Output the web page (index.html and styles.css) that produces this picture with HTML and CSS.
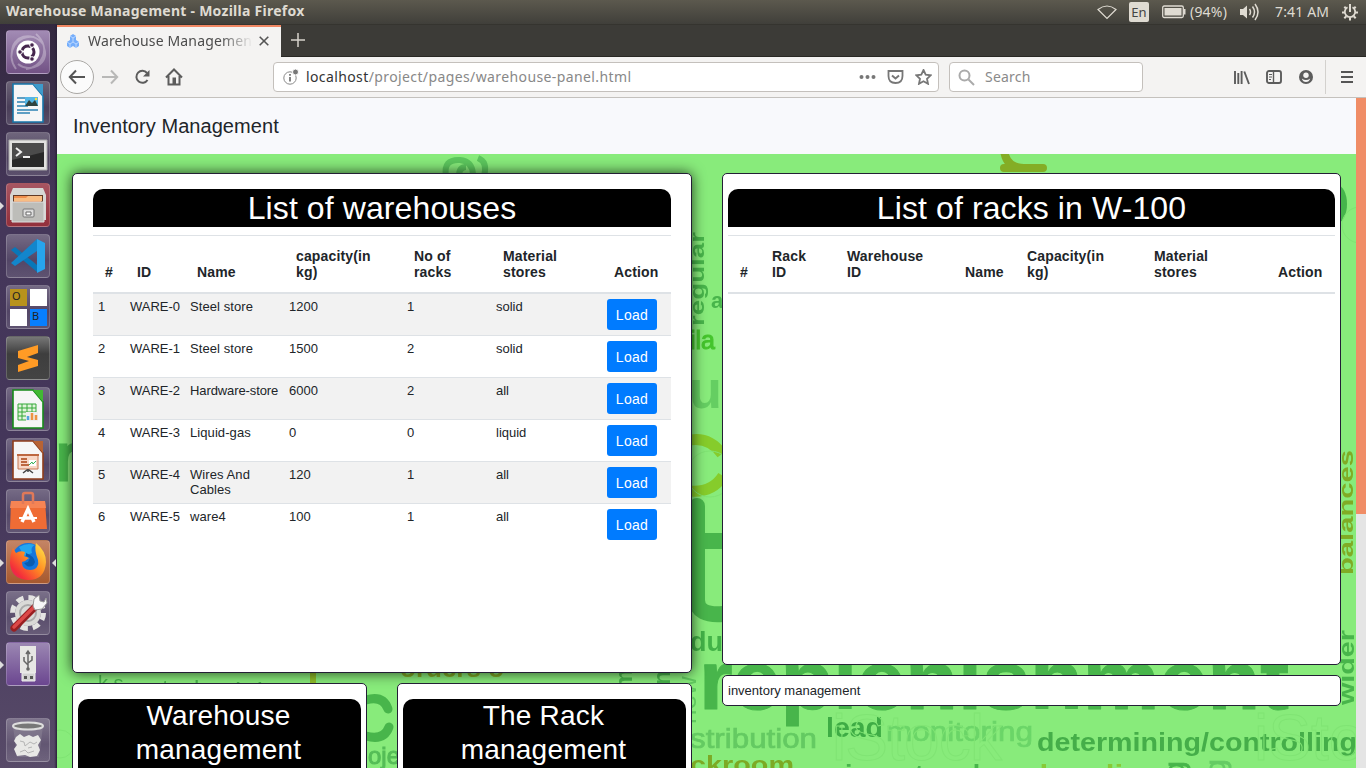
FILE: index.html
```html
<!DOCTYPE html>
<html lang="en">
<head>
<meta charset="utf-8">
<title>Warehouse Management</title>
<link rel="stylesheet" href="styles.css">
</head>
<body>
<header class="topbar">
  <b class="win-title">Warehouse Management - Mozilla Firefox</b>
  <div class="indicators">
    <svg class="i-wifi" width="20" height="16" viewBox="0 0 20 16"><path d="M1 5.500Q10-1.500 19 5.500L10 14.500Z" fill="none" stroke="#dfdbd2" stroke-width="1.200"/></svg>
    <span class="lang">En</span>
    <svg class="i-batt" width="24" height="14" viewBox="0 0 24 14"><rect x=".7" y="1" width="20.600" height="11.500" rx="1.500" fill="none" stroke="#dfdbd2" stroke-width="1.300"/><rect x="2.500" y="3" width="17" height="7.500" fill="#dfdbd2"/><path d="M22.500 4v5.500" stroke="#dfdbd2" stroke-width="2"/></svg>
    <span class="pct">(94%)</span>
    <svg class="i-vol" width="21" height="18" viewBox="0 0 21 18"><path d="M1 6h3l4-3.500v13L4 12H1z" fill="#dfdbd2"/><path d="M10.500 6q2 3 0 6M13.500 3.500q4 5.500 0 11M16 1q6 8 0 16" fill="none" stroke="#dfdbd2" stroke-width="1.500"/></svg>
    <span class="clock">7:41 AM</span>
    <svg class="i-gear" width="18" height="18" viewBox="0 0 18 18"><g fill="none" stroke="#dfdbd2"><path d="M6.500 4.300a5.200 5.200 0 1 0 5 0" stroke-width="1.800"/><path d="M9 1v8" stroke-width="2"/><path d="M1 9.500h3M14 9.500h3M3.300 3.800l2 2M14.700 3.800l-2 2M3.300 15.200l2-2M14.700 15.200l-2-2M9 14.500v3" stroke-width="2"/></g></svg>
  </div>
</header>
<div class="desktop">
<nav class="launcher">
  <div class="tile dash"><svg viewBox="0 0 44 44"><g fill="none" stroke="#fff" opacity=".3" stroke-width="2"><path d="M6 22C6 6 26 0 37 14M38 18C44 34 24 44 12 34M10 39C-2 22 12 4 28 7M30 4c16 14 6 34-10 35"/></g><circle cx="22" cy="22" r="11.500" fill="#fff"/><circle cx="22" cy="22" r="6" fill="none" stroke="#45264d" stroke-width="3" stroke-dasharray="10.500 2" stroke-dashoffset="5"/><g fill="#45264d" stroke="#fff"><circle cx="14" cy="22" r="2.300"/><circle cx="26" cy="15" r="2.300"/><circle cx="26" cy="29" r="2.300"/></g></svg></div>
  <div class="tile"><svg viewBox="0 0 44 44"><path d="M7 3h20l10 12v26H7z" fill="#f6f6f6" stroke="#1676a9" stroke-width="1.600"/><path d="M27 3h10v12z" fill="#3d9acb"/><path d="M11 17h11M11 21h11M11 25h11M11 29h21M11 32h13" stroke="#2c83b4" stroke-width="1.600"/><path d="M19 16h13v9H19z" fill="#54b6e5"/><path d="M19 25l4-6 3 3 3-3 3 6z" fill="#30433e"/><circle cx="30" cy="18" r="1.200" fill="#ffdf3a"/></svg></div>
  <div class="tile"><svg viewBox="0 0 44 44"><path d="M3 8h38v30H3z" fill="#e1e1df" stroke="#aaa"/><path d="M6 11h32v24H6z" fill="#282828"/><path d="M6 11h32v9L6 28z" fill="#4b4b4b"/><path d="M10 16l5 4-5 4M17 25h7" fill="none" stroke="#eee" stroke-width="2"/></svg></div>
  <div class="tile files"><i class="pip"></i><svg viewBox="0 0 44 44"><path d="M7 5h30l3 7v25H4V12z" fill="#d7d7d4"/><path d="M7 12h30v8H7z" fill="#623a25"/><path d="M8 13h27v6H8z" fill="#ef8e4d"/><path d="M8 15h12l2-2h14v5H8z" fill="#f8bd83"/><path d="M6 19h32v20H6z" fill="#bdbdb9" stroke="#ddd"/><rect x="17" y="26" width="11" height="8" rx="1" fill="#ddd" stroke="#777"/><path d="M20 29h5v3h-5z" fill="#fff" stroke="#666"/></svg></div>
  <div class="tile"><svg viewBox="0 0 44 44"><path d="M5 16l4-3 22 18v7L5 16z" fill="#0877b9"/><path d="M31 5v12L9 32l-4-3L31 5z" fill="#1386cc"/><path d="M31 5l8 4v26l-8 4z" fill="#27a4ec"/></svg></div>
  <div class="tile workspaces"><span class="ws gold">O</span><span class="ws"></span><span class="ws"></span><span class="ws blue">B</span></div>
  <div class="tile sublime"><svg viewBox="0 0 44 44"><path d="M12 15l20-6v8l-11 4 11 3v6l-20 6v-7l11-4-11-3z" fill="#ff9b25"/></svg></div>
  <div class="tile"><svg viewBox="0 0 44 44"><path d="M7 3h20l10 12v26H7z" fill="#f6f6f6" stroke="#168b19" stroke-width="1.600"/><path d="M27 3h10v12z" fill="#42b833"/><path d="M12 17h18v16H12zM12 21h18M12 25h18M12 29h18M16 17v16M21 17v16M26 17v16" fill="#e2f4dc" stroke="#35a839"/><path d="M20 25h12v9H20z" fill="#eee"/><path d="M22 33v-4" stroke="#51a5dc" stroke-width="2.500"/><path d="M26 33v-7M30 33v-5" stroke="#ed9342" stroke-width="2.500"/></svg></div>
  <div class="tile"><svg viewBox="0 0 44 44"><path d="M7 3h20l10 12v26H7z" fill="#f6f6f6" stroke="#8f3d1b" stroke-width="1.600"/><path d="M27 3h10v12z" fill="#b76334"/><path d="M12 17h20v14H12z" fill="#f8d8c7" stroke="#c67853"/><path d="M11 17h22M15 21h6M15 24h6M15 27h14" stroke="#bd6740" stroke-width="2"/><path d="M23 22h7v6h-7z" fill="#fff"/><path d="M23 27l3-3 1 2 3-3" stroke="#36b35a" fill="none"/><path d="M17 35l4-3h2l4 3M22 31v3" stroke="#444" stroke-width="1.500" fill="none"/></svg></div>
  <div class="tile"><svg viewBox="0 0 44 44"><path d="M5 12h34l2 28H4z" fill="#ef6c35"/><path d="M5 12h34l1 7H4z" fill="#f58454"/><path d="M17 15V6q0-2 2-2h6q2 0 2 2v9" fill="none" stroke="#df7959" stroke-width="2.500"/><path d="M16 33l6-13 6 13M18 29h9" fill="none" stroke="#fff" stroke-width="3.500"/><path d="M13 29h18" stroke="#fff" stroke-width="2"/></svg></div>
  <div class="tile fox"><i class="pip"></i><i class="pip pip-active"></i><svg viewBox="0 0 44 44"><defs><linearGradient id="fx" x1="1" y1="0" x2="0" y2="1"><stop stop-color="#fff04e"/><stop offset=".45" stop-color="#ff8b22"/><stop offset=".8" stop-color="#f42d3b"/><stop offset="1" stop-color="#d31a86"/></linearGradient></defs><circle cx="22" cy="19" r="16" fill="#1576dd"/><path d="M13 7q8-5 16-2-5 2-3 8l-8 3z" fill="#23a6ef"/><path d="M7 8l3 5q4-3 9-1l-1 4 5 2-4 3-3 1q0 8 8 8 5 0 7-3 2-3 1-7-4-10-2-17 10 8 10 19-1 18-18 18Q5 39 4 23 4 13 7 8z" fill="url(#fx)"/><path d="M20 13q8 3 9 9-2 6-8 4l-3-3 4-1 2-4-4-2z" fill="#0a5bb0"/></svg></div>
  <div class="tile"><svg viewBox="0 0 44 44"><circle cx="22" cy="22" r="13" fill="#dadad7"/><circle cx="22" cy="22" r="15.500" fill="none" stroke="#e4e4e2" stroke-width="5" stroke-dasharray="7.200 4.970"/><circle cx="22" cy="22" r="8" fill="none" stroke="#aaa" stroke-width="2"/><path d="M8 37L31 14" stroke="#981f21" stroke-width="7" stroke-linecap="round"/><path d="M8 36L29 15" stroke="#dc4948" stroke-width="3.500" stroke-linecap="round"/><path d="M27 15l1-7 5-4 1 6 4 1 2-4 1 5-5 6-7 1z" fill="#f7f7f7" stroke="#999"/></svg></div>
  <div class="tile usb"><i class="pip"></i><svg viewBox="0 0 44 44"><path d="M14 4h16v27H14z" fill="#e6e6e4"/><path d="M16 31h13v8H16z" fill="#d1d1d1" stroke="#eee"/><path d="M18 34h3v3h-3zM24 34h3v3h-3z" fill="#555"/><path d="M22 10v17M22 23l-4-4v-4M22 21l4-3v-4M20 12l2-3 2 3" fill="none" stroke="#666" stroke-width="1.500"/><circle cx="22" cy="27" r="1.800" fill="#666"/></svg></div>
  <div class="tile trash"><svg viewBox="0 0 44 44"><path d="M7 8h30l-4 31H11z" fill="#8a8396" opacity=".55"/><path d="M10 19l4-3 4 3 5-2 4 2 5-2 3 5-3 5 2 5-3 6-7 1-5-2-8 1-3-7 3-4-3-4z" fill="#e8e8e6"/><path d="M14 23l4 1 1 4 5-4 4 2 3-2M14 34l5-2 3 3 6-2M22 30l4-1" fill="none" stroke="#b5b5b5"/><ellipse cx="22" cy="8" rx="15" ry="3.500" fill="#777" stroke="#ddd" stroke-width="2"/></svg></div>
</nav>
<main class="browser">
  <div class="tabs">
    <div class="tab"><svg class="fav" width="12" height="14" viewBox="0 0 12 14"><path d="M6 0l3 2v4L6 8 3 6V2zM3 6l3 2v4l-3 2-3-2V8zM9 6l3 2v4l-3 2-3-2V8z" fill="#74adfb"/><path d="M3 2l3 2 3-2M6 4v4M0 8l3 2 3-2 3 2 3-2M3 10v4M9 10v4" fill="none" stroke="#cce1ff" stroke-width=".8"/></svg><span class="tab-title">Warehouse Management</span><svg class="x" width="10" height="10" viewBox="0 0 10 10"><path d="M.7.700l8.600 8.600M9.300.700L.7 9.300" stroke="#555" stroke-width="1.600"/></svg></div>
    <svg class="plus" width="14" height="14" viewBox="0 0 14 14"><path d="M7 0v14M0 7h14" stroke="#d6d3cc" stroke-width="1.500"/></svg>
  </div>
  <div class="toolbar">
    <div class="back"><svg width="18" height="16" viewBox="0 0 18 16"><path d="M8 1.500L1.800 8 8 14.500M2 8h15" fill="none" stroke="#555" stroke-width="2"/></svg></div>
    <svg class="fwd" width="18" height="16" viewBox="0 0 18 16"><path d="M10 1.500L16.200 8 10 14.500M16 8H1" fill="none" stroke="#b8b8b7" stroke-width="2"/></svg>
    <svg class="reload" width="17" height="16" viewBox="0 0 17 16"><path d="M13.500 11a6 6 0 1 1-.5-7" fill="none" stroke="#5c5c5c" stroke-width="2"/><path d="M15.500 1v6.500H9z" fill="#5c5c5c"/></svg>
    <svg class="home" width="18" height="18" viewBox="0 0 18 18"><path d="M1 9.500L9 1.500l8 8M3.500 8v8.500h11V8" fill="none" stroke="#5c5c5c" stroke-width="2"/><path d="M7.500 16V9.500h3.500V16z" fill="#5c5c5c"/></svg>
    <div class="url"><svg width="17" height="16" viewBox="0 0 17 16"><circle cx="7" cy="9" r="6.200" fill="none" stroke="#888"/><path d="M7 8v4.500M7 5v1.700" stroke="#777" stroke-width="1.800"/><circle cx="12.500" cy="3" r="3" fill="#777" stroke="#fff"/></svg><span class="address">localhost<em>/project/pages/warehouse-panel.html</em></span>
      <div class="url-icons"><svg width="17" height="16" viewBox="0 0 17 16"><g fill="#777"><circle cx="2.500" cy="8" r="2"/><circle cx="8.500" cy="8" r="2"/><circle cx="14.500" cy="8" r="2"/></g></svg><svg width="17" height="16" viewBox="0 0 17 16"><path d="M1.500 2h14v5q0 7-7 7t-7-7z" fill="none" stroke="#777" stroke-width="1.800"/><path d="M5 6.500l3.500 3 3.500-3" fill="none" stroke="#777" stroke-width="2"/></svg><svg width="17" height="16" viewBox="0 0 17 16"><path d="M8.500 1l2.200 4.700 5 .6-3.700 3.500 1 5-4.500-2.500L4 14.800l1-5L1.300 6.300l5-.6z" fill="none" stroke="#777" stroke-width="1.800"/></svg></div>
    </div>
    <div class="search"><svg width="17" height="17" viewBox="0 0 17 17"><circle cx="6.500" cy="6.500" r="5" fill="none" stroke="#aaa" stroke-width="2"/><path d="M10.500 10.500l5.500 5.500" stroke="#aaa" stroke-width="2"/></svg><span>Search</span></div>
    <svg class="lib" width="16" height="15" viewBox="0 0 16 15"><path d="M1 1v13M4.300 3v11M7.600 1v13M10.300 1.500L15 14" stroke="#5c5c5c" stroke-width="1.900"/></svg>
    <svg class="side" width="16" height="14" viewBox="0 0 16 14"><rect x="1" y="1" width="14" height="12" rx="2" fill="none" stroke="#5c5c5c" stroke-width="1.900"/><path d="M7.500 1v12" stroke="#5c5c5c" stroke-width="1.400"/><path d="M3 4.500h3M3 7h3M3 9.500h2" stroke="#5c5c5c"/></svg>
    <svg class="acct" width="14" height="14" viewBox="0 0 14 14"><circle cx="7" cy="7" r="7" fill="#5c5c5c"/><circle cx="7" cy="5.300" r="2.700" fill="#f4f3f2"/><path d="M2.800 8.500q4.200 3 8.400 0-1 3.500-4.200 3.500T2.800 8.500z" fill="#f4f3f2"/></svg>
    <div class="menu"><svg width="12" height="12" viewBox="0 0 12 12"><path d="M0 1h12M0 6h12M0 11h12" stroke="#555" stroke-width="1.800"/></svg></div>
  </div>
  <div class="viewport">
  <div class="page">
    <div class="navbar">Inventory Management</div>
    <div class="content">
      <svg class="cloud" viewBox="57 154 1299 614" width="1299" height="614" font-family="Liberation Sans" font-weight="700" fill="#48b54b">
        <path d="M446 176q-3-17 14-16 12 1 13 14M459 176q0-9 7-9M484 176q4-14-6-18" fill="none" stroke="#5cc65d" stroke-width="6"/>
        <path d="M1004 150q2 18 20 18h19M1004 168h38" fill="none" stroke="#84ad25" stroke-width="8" stroke-linecap="round"/>
        <text transform="translate(704 326) rotate(-90)" font-size="20" textLength="94" lengthAdjust="spacingAndGlyphs">regular</text>
        <text x="711" y="308" font-size="22">a</text>
        <text x="690" y="349" font-size="25" font-weight="400" fill="#45c42d" stroke="#45c42d">ila</text>
        <text x="689" y="408" font-size="54" fill="#65ce62">ur</text>
        <path d="M686 441q22-6 36 13M690 491q22 2 33-15" fill="none" stroke="#86cc2b" stroke-width="11"/>
        <text x="690" y="528" font-size="20" font-family="Liberation Serif" fill="#73da6b">y</text>
        <path d="M697 506v94q0 16 26 14M685 541h38" fill="none" stroke="#48b54b" stroke-width="16" stroke-linecap="round"/>
        <text x="690" y="651" font-size="27" fill="#43b248">du</text>
        <text x="699" y="709" font-size="84" textLength="590" lengthAdjust="spacingAndGlyphs" stroke="#48b54b" stroke-width="1" stroke-linejoin="round">replenishment</text>
        <text transform="translate(696 724) rotate(-90)" font-size="26" font-weight="400" fill="#60c95f">new</text>
        <text x="690" y="748" font-size="27" font-weight="400" stroke="#64ca62" stroke-width=".7" fill="#64ca62" textLength="127" lengthAdjust="spacingAndGlyphs">stribution</text>
        <text x="826" y="737" font-size="27" fill="#3eac45" textLength="57" lengthAdjust="spacingAndGlyphs">lead</text>
        <text x="886" y="741" font-size="27" font-weight="400" stroke="#6bd568" stroke-width=".7" fill="#6bd568" textLength="147" lengthAdjust="spacingAndGlyphs">monitoring</text>
        <text x="1037" y="751" font-size="26" fill="#45ae49" textLength="320" lengthAdjust="spacingAndGlyphs">determining/controlling</text>
        <text x="690" y="773" font-size="24" fill="#7caa25" textLength="104" lengthAdjust="spacingAndGlyphs">ckroom</text>
        <text x="845" y="783" font-size="26" textLength="150" lengthAdjust="spacingAndGlyphs">inventory la</text>
        <text x="1010" y="783" font-size="25" fill="#87ca37" textLength="148" lengthAdjust="spacingAndGlyphs">rchandise</text>
        <text transform="translate(1184 777) rotate(-90)" font-size="28" font-weight="400" stroke="#48b54b">g</text>
        <text transform="translate(1225 775) rotate(-90)" font-size="28" font-weight="400" fill="#65cb64" stroke="#65cb64">g</text>
        <text transform="translate(1353 575) rotate(-90)" font-size="21" fill="#80ac25" textLength="125" lengthAdjust="spacingAndGlyphs">balances</text>
        <text transform="translate(1354 705) rotate(-90)" font-size="22" textLength="75" lengthAdjust="spacingAndGlyphs">wider</text>
        <ellipse cx="1337" cy="204" rx="10" ry="19" fill="#45b44b"/>
        <g fill="none" stroke="#7fe373"><circle cx="1360" cy="225" r="18"/><circle cx="710" cy="474" r="23"/><circle cx="60" cy="744" r="14"/></g>
        <text x="832" y="760" font-size="64" font-weight="400" fill="none" stroke="#80e474" textLength="170">iStock</text>
        <text x="1254" y="760" font-size="64" font-weight="400" fill="none" stroke="#80e474">iSto</text>
        <path d="M366 700q17-5 22 9M366 736q18 5 23-9" fill="none" stroke="#48b54b" stroke-width="9" stroke-linecap="round"/>
        <text x="368" y="764" font-size="24" font-weight="400" fill="#55bd57" stroke="#55bd57">ojec</text>
        <text x="56" y="480" font-size="66" font-weight="400" stroke="#48b54b" stroke-width="3">r</text>
        <text x="98" y="690" font-size="20" font-weight="400">k s</text>
        <text x="150" y="697" font-size="24" font-weight="400">stock</text>
        <text x="235" y="702" font-size="28" font-weight="400">lab</text>
        <path d="M313 671v12" stroke="#8fbd28" stroke-width="6"/>
        <text x="400" y="677" font-size="26" fill="#80ac25">orders o</text>
        <text x="495" y="701" font-size="26">a</text>
        <text transform="translate(632 690) rotate(-90)" font-size="24">m</text>
        <text transform="translate(670 700) rotate(-90)" font-size="24">on</text>
      </svg>
      <div class="left">
        <section class="card main-card">
          <h2>List of warehouses</h2>
          <table class="t-ware">
            <colgroup><col class="w32"><col class="w60"><col class="w99"><col class="w118"><col class="w89"><col class="w111"><col class="w69"></colgroup>
            <thead><tr><th>#</th><th>ID</th><th>Name</th><th>capacity(in kg)</th><th>No of racks</th><th>Material stores</th><th>Action</th></tr></thead>
            <tbody>
              <tr><td>1</td><td>WARE-0</td><td>Steel store</td><td>1200</td><td>1</td><td>solid</td><td><button>Load</button></td></tr>
              <tr><td>2</td><td>WARE-1</td><td>Steel store</td><td>1500</td><td>2</td><td>solid</td><td><button>Load</button></td></tr>
              <tr><td>3</td><td>WARE-2</td><td class="one-line">Hardware-store</td><td>6000</td><td>2</td><td>all</td><td><button>Load</button></td></tr>
              <tr><td>4</td><td>WARE-3</td><td>Liquid-gas</td><td>0</td><td>0</td><td>liquid</td><td><button>Load</button></td></tr>
              <tr><td>5</td><td>WARE-4</td><td>Wires And Cables</td><td>120</td><td>1</td><td>all</td><td><button>Load</button></td></tr>
              <tr><td>6</td><td>WARE-5</td><td>ware4</td><td>100</td><td>1</td><td>all</td><td><button>Load</button></td></tr>
            </tbody>
          </table>
        </section>
        <div class="pair">
          <section class="card small"><h3>Warehouse management</h3></section>
          <section class="card small"><h3>The Rack management</h3></section>
        </div>
      </div>
      <div class="right">
        <section class="card racks">
          <h2>List of racks in W-100</h2>
          <table class="t-racks">
            <colgroup><col class="w32"><col class="w75"><col class="w118"><col class="w62"><col class="w127"><col class="w124"><col class="w69"></colgroup>
            <thead><tr><th>#</th><th>Rack ID</th><th>Warehouse ID</th><th>Name</th><th>Capacity(in<br>kg)</th><th>Material stores</th><th>Action</th></tr></thead>
          </table>
        </section>
        <section class="card note">inventory management</section>
      </div>
    </div>
  </div>
  <div class="scroll"><div class="thumb"></div></div>
  </div>
</main>
</div>
</body>
</html>
```
FILE: styles.css
```css
* { box-sizing: border-box; }
body { margin: 0; width: 1366px; height: 768px; overflow: hidden; display: flex; flex-direction: column; font-family: "Liberation Sans", Arial, sans-serif; color: #212529; }
svg { display: block; flex: none; }
.topbar { height: 24px; flex: none; display: flex; align-items: center; justify-content: space-between; padding: 0 7px 0 6px; background: linear-gradient(#5c594e, #403f3a); color: #dfdbd2; font-family: "Noto Sans", sans-serif; white-space: nowrap; }
.win-title { font-size: 14px; line-height: 22px; padding-bottom: 2px; letter-spacing: 0.26px; }
.indicators { display: flex; align-items: center; font-size: 14px; }
.lang { width: 20px; height: 20px; margin-left: 12px; background: #dfdbd2; color: #444; border-radius: 2px; font-size: 13px; line-height: 20px; text-align: center; }
.i-batt { margin-left: 13px; }
.pct { width: 38px; margin-left: 4px; padding-bottom: 2px; letter-spacing: 0.2px; }
.i-vol { margin-left: 11px; }
.clock { width: 54px; margin-left: 15px; padding-bottom: 2px; letter-spacing: 0.15px; }
.i-gear { margin-left: 12px; }
.desktop { flex: 1; display: flex; min-height: 0; }
.launcher { width: 57px; flex: none; display: flex; flex-direction: column; gap: 7px; padding: 6px 0 0 6px; background: linear-gradient(90deg, #0000 95%, #2b2139), linear-gradient(#33283f, #45375a 25%, #44365a 60%, #574a68); }
.tile { position: relative; width: 44px; height: 44px; flex: none; border-radius: 4px; border: 1px solid #ffffff30; background: linear-gradient(#ffffff42, #ffffff14 60%, #ffffff24); }
.tile > svg { width: 44px; height: 44px; margin: -1px; }
.dash { background: linear-gradient(#a28bb4, #725285); }
.files { background: linear-gradient(#a75561, #932f3b); }
.sublime { background: linear-gradient(#777, #3e3e3e 40%, #444); }
.fox { background: linear-gradient(#c48465, #a6592e); }
.usb { background: linear-gradient(#9b87b2, #6b4690); }
.trash { margin-top: 25px; }
.workspaces { display: grid; grid-template-columns: 17px 17px; grid-template-rows: 17px 17px; gap: 3px; padding: 3px; }
.ws { background: #fff; font: 11px/13px "Noto Sans", sans-serif; padding-left: 2px; color: #222; }
.gold { background: #b8921c; }
.blue { background: #087fff; }
.pip { position: absolute; left: -7px; top: 18px; border: 4px solid transparent; border-left-color: #ddd; border-right: 0; }
.pip-active { left: auto; right: -7px; border-left: 0; border-right: 4px solid #ddd; }
.browser { flex: 1; display: flex; flex-direction: column; min-width: 0; }
.tabs { height: 33px; flex: none; display: flex; background: #3c3b37; border-top: 1px solid #35342f; border-bottom: 1px solid #292824; }
.tab { height: 32px; width: 224px; flex: none; display: flex; align-items: center; padding: 0 0 3px 10px; background: #f4f3f2; border-top: 2px solid #f08763; font: 14px "Noto Sans", sans-serif; color: #4c4c4c; }
.tab-title { width: 165px; margin-left: 9px; overflow: hidden; white-space: nowrap; letter-spacing: 0.15px; -webkit-mask-image: linear-gradient(90deg, #000 80%, transparent); mask-image: linear-gradient(90deg, #000 80%, transparent); }
.tab .x { margin-left: 6px; }
.plus { margin: 8px 0 0 10px; }
.toolbar { height: 41px; flex: none; display: flex; align-items: center; padding-left: 3px; background: #f4f3f2; border-bottom: 1px solid #c4c1bd; font: 14px "Noto Sans", sans-serif; }
.back { width: 34px; height: 34px; flex: none; display: grid; place-items: center; border: 1px solid #aaa8a5; border-radius: 50%; background: #fbfbfb; }
.fwd { margin-left: 7px; }
.reload { margin-left: 15px; }
.home { margin-left: 14px; }
.url { width: 666px; height: 30px; margin-left: 90px; display: flex; align-items: center; padding-left: 9px; background: #fff; border: 1px solid #c4c0bc; border-radius: 4px; color: #333; }
.address { margin-left: 6px; padding-bottom: 1px; letter-spacing: 0.39px; }
.address em { font-style: normal; color: #888; }
.url-icons { display: flex; gap: 11px; margin-left: auto; padding-right: 6px; }
.search { width: 194px; height: 30px; margin-left: 10px; display: flex; align-items: center; gap: 10px; padding-left: 8px; background: #fff; border: 1px solid #c4c0bc; border-radius: 4px; color: #8a8a8a; }
.search span { padding-bottom: 2px; letter-spacing: 0.2px; }
.lib { margin-left: 91px; }
.side { margin-left: 16px; }
.acct { margin-left: 17px; }
.menu { margin-left: 12px; height: 34px; border-left: 1px solid #d3d1ce; padding: 11px 0 0 15px; }
.viewport { flex: 1; display: flex; min-height: 0; }
.page { width: 1299px; display: flex; flex-direction: column; }
.navbar { height: 56px; flex: none; padding: 0 16px; line-height: 56px; font-size: 20px; letter-spacing: 0.06px; background: #f8f9fc; }
.content { position: relative; flex: 1; min-height: 0; overflow: hidden; display: flex; gap: 30px; padding: 19px 15px 0; background: #88eb7b; }
.cloud { position: absolute; left: 0; top: 0; filter: blur(0.5px); }
.left, .right { position: relative; display: flex; flex-direction: column; gap: 10px; }
.left { width: 620px; }
.right { width: 619px; }
.card { flex: none; background: #fff; border: 1px solid #231f35; border-radius: 5px; }
.main-card { height: 500px; padding: 15px 20px; box-shadow: 0 0 14px #000b; }
.racks { height: 492px; padding: 15px 5px; }
.note { height: 31px; padding: 0 5px; font-size: 13px; line-height: 29px; }
.pair { display: flex; gap: 30px; }
.small { width: 295px; height: 160px; padding: 15px 5px; }
h2, h3 { margin: 0; background: #000; color: #fff; font-weight: 400; text-align: center; border-radius: 10px 10px 0 0; }
h2 { height: 38px; margin-bottom: 8px; font-size: 32px; line-height: 38px; letter-spacing: 0.1px; }
h3 { height: 100px; font-size: 28px; line-height: 34px; letter-spacing: 0.2px; padding: 0 41px 0 39px; }
table { table-layout: fixed; border-spacing: 0; width: 578px; }
.t-racks { width: 607px; }
th { height: 59px; padding: 12px; border-top: 1px solid #dee2e6; border-bottom: 2px solid #dee2e6; font-size: 14px; line-height: 16px; letter-spacing: 0.15px; text-align: left; vertical-align: bottom; }
th:last-child { padding-right: 0; }
td { padding: 5px; border-top: 1px solid #dee2e6; height: 42px; font-size: 13px; line-height: 15px; vertical-align: top; white-space: nowrap; }
td:nth-child(3) { white-space: normal; letter-spacing: 0.08px; }
td.one-line:nth-child(3) { white-space: nowrap; letter-spacing: -0.1px; }
tbody tr:first-child td { border-top: 0; height: 41px; }
tbody tr:nth-child(odd) { background: #f2f2f2; }
button { display: block; width: 50px; height: 31px; padding: 0; border: 0; border-radius: 3px; background: #007bff; color: #fff; font: 14px "Liberation Sans", sans-serif; letter-spacing: 0.3px; }
.w32 { width: 32px; } .w60 { width: 60px; } .w62 { width: 62px; } .w69 { width: 69px; } .w75 { width: 75px; } .w89 { width: 89px; } .w99 { width: 99px; } .w111 { width: 111px; } .w118 { width: 118px; } .w124 { width: 124px; } .w127 { width: 127px; }
.scroll { width: 10px; background: #e5e5e5; }
.thumb { height: 416px; background: #f08d66; }
```
